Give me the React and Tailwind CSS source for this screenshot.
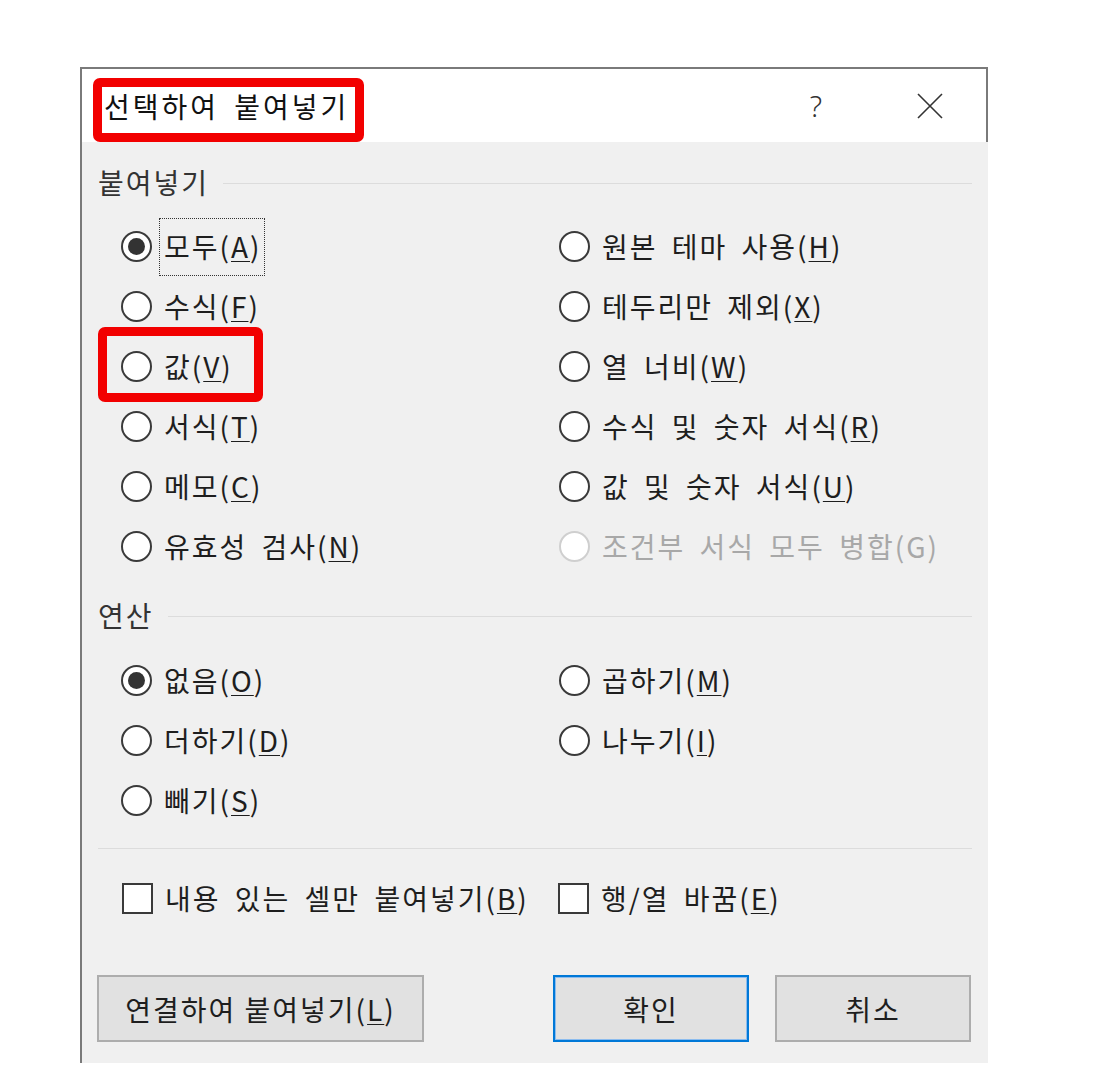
import React from "react";

function Radio({ checked, disabled }) {
  return (
    <span
      className={
        disabled
          ? "w-[31px] h-[31px] rounded-full border-2 border-[#cfcfcf] bg-white flex items-center justify-center shrink-0"
          : "w-[31px] h-[31px] rounded-full border-2 border-[#3a3a3a] bg-white flex items-center justify-center shrink-0"
      }
    >
      {checked && <span className="w-[17px] h-[17px] rounded-full bg-[#333]" />}
    </span>
  );
}

function Label({ t, k, disabled }) {
  return (
    <span className={disabled ? "text-[#a8a8a8] leading-[30px]" : "text-[#1e1e1e] leading-[30px]"}>
      {t}({disabled ? k : <u className="underline decoration-1 underline-offset-[3px]">{k}</u>})
    </span>
  );
}

function RadioItem({ t, k, checked, disabled, focus, highlight }) {
  return (
    <div className="relative h-[60px] flex items-center gap-[12px]">
      <Radio checked={checked} disabled={disabled} />
      {focus ? (
        <span className="relative">
          <Label t={t} k={k} disabled={disabled} />
          <span className="absolute -left-[5px] -right-[3px] -top-[7px] -bottom-[9px] border border-dotted border-[#333]" />
        </span>
      ) : (
        <Label t={t} k={k} disabled={disabled} />
      )}
      {highlight && (
        <span className="absolute left-[-23px] top-[-9px] w-[165px] h-[75px] border-[9px] border-[#f20000] rounded-[7px]" />
      )}
    </div>
  );
}

function CheckItem({ t, k }) {
  return (
    <div className="h-[60px] flex items-center gap-[12px]">
      <span className="w-[31px] h-[31px] border-2 border-[#3a3a3a] bg-white shrink-0" />
      <Label t={t} k={k} />
    </div>
  );
}

function Header({ children }) {
  return (
    <div className="h-[40px] flex items-center">
      <span className="text-[#333] leading-[30px]">{children}</span>
      <span className="flex-1 h-px bg-[#dcdcdc] ml-[14px] mt-[2px]" />
    </div>
  );
}

export default function App() {
  return (
    <div className="w-[1102px] h-[1083px] bg-white pt-[67px] pl-[80px] font-['Noto_Sans_CJK_KR','Noto_Sans',sans-serif] text-[28px] tracking-[2px] [word-spacing:6px]">
      <div className="w-[908px] border-l-2 border-[#7a7a7a]">
        {/* title bar */}
        <div className="relative h-[75px] bg-white border-t-2 border-r-2 border-[#7a7a7a] flex items-center pl-[22px]">
          <span className="text-[#111] leading-[32px] tracking-[3px]">선택하여 붙여넣기</span>
          <span className="absolute left-[11px] top-[9px] w-[271px] h-[64px] border-[9px] border-[#f20000] rounded-[7px]" />
          <span className="ml-auto w-[20px] text-center font-['Noto_Sans',sans-serif] font-light text-[29px] tracking-normal text-[#333] leading-[32px]">?</span>
          <svg className="ml-[91px] mr-[43px]" width="26" height="26" viewBox="0 0 26 26">
            <path d="M1 1 L25 25 M25 1 L1 25" stroke="#333" strokeWidth="1.6" fill="none" />
          </svg>
        </div>
        {/* body */}
        <div className="bg-[#f0f0f0] h-[921px] pt-[20px] pl-[16px] pr-[16px]">
          <Header>붙여넣기</Header>
          <div className="mt-[14px] grid grid-cols-[438px_1fr] pl-[23px]">
            <RadioItem t="모두" k="A" checked focus />
            <RadioItem t="원본 테마 사용" k="H" />
            <RadioItem t="수식" k="F" />
            <RadioItem t="테두리만 제외" k="X" />
            <RadioItem t="값" k="V" highlight />
            <RadioItem t="열 너비" k="W" />
            <RadioItem t="서식" k="T" />
            <RadioItem t="수식 및 숫자 서식" k="R" />
            <RadioItem t="메모" k="C" />
            <RadioItem t="값 및 숫자 서식" k="U" />
            <RadioItem t="유효성 검사" k="N" />
            <RadioItem t="조건부 서식 모두 병합" k="G" disabled />
          </div>
          <div className="mt-[19px]">
            <Header>연산</Header>
          </div>
          <div className="mt-[15px] grid grid-cols-[438px_1fr] pl-[23px]">
            <RadioItem t="없음" k="O" checked />
            <RadioItem t="곱하기" k="M" />
            <RadioItem t="더하기" k="D" />
            <RadioItem t="나누기" k="I" />
            <RadioItem t="빼기" k="S" />
          </div>
          <div className="mt-[18px] h-px bg-[#dcdcdc]" />
          <div className="mt-[19px] grid grid-cols-[436px_1fr] pl-[24px]">
            <CheckItem t="내용 있는 셀만 붙여넣기" k="B" />
            <CheckItem t="행/열 바꿈" k="E" />
          </div>
          <div className="mt-[47px] flex -ml-px">
            <button className="w-[327px] h-[67px] border-2 border-[#adadad] bg-[#e1e1e1] text-[#1e1e1e] flex items-center justify-center">
              <span>연결하여 붙여넣기(<u className="underline decoration-1 underline-offset-[3px]">L</u>)</span>
            </button>
            <button className="ml-[129px] w-[196px] h-[67px] border-2 border-[#0078d7] shadow-[inset_0_0_0_1px_#8cbcee] bg-[#e1e1e1] text-[#1e1e1e] flex items-center justify-center">
              확인
            </button>
            <button className="ml-[26px] w-[196px] h-[67px] border-2 border-[#adadad] bg-[#e1e1e1] text-[#1e1e1e] flex items-center justify-center">
              취소
            </button>
          </div>
        </div>
      </div>
    </div>
  );
}
